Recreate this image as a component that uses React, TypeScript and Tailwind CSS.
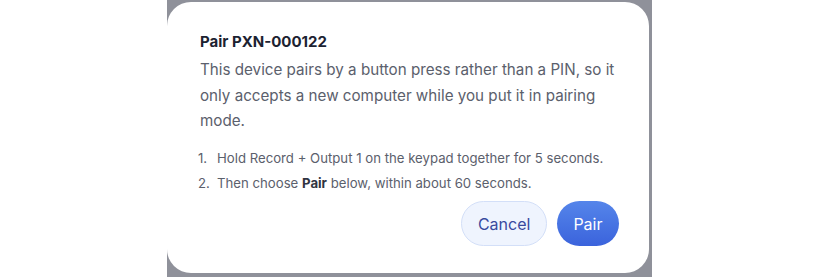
export default function App() {
  return (
    <div className="h-[277px] w-[820px] overflow-hidden bg-white" style={{ fontFamily: "Inter, 'Noto Sans', sans-serif" }}>
      <div className="ml-[167px] h-[277px] w-[485px] bg-[#8f919a] pt-[2px]">
        <div className="h-[271px] w-[482px] rounded-3xl bg-white pl-[33px] pr-[30px] pt-[30px]">
          <h2 className="text-[15px] font-bold leading-[20px] text-[#1c2231]">Pair PXN-000122</h2>
          <p className="mt-[5px] text-[15.2px] leading-[25.5px] text-[#5b606c]">
            This device pairs by a button press rather than a PIN, so it only accepts a new computer while you put it in pairing mode.
          </p>
          <ol className="-ml-[2px] mt-[15px] flex flex-col gap-[6.5px] text-[13.2px] leading-[19px] text-[#5b606c]">
            <li className="flex">
              <span className="w-[19px] shrink-0">1.</span>
              <span>Hold Record + Output 1 on the keypad together for 5 seconds.</span>
            </li>
            <li className="flex">
              <span className="w-[19px] shrink-0">2.</span>
              <span>
                Then choose <b className="font-bold text-[#2f3441]">Pair</b> below, within about 60 seconds.
              </span>
            </li>
          </ol>
          <div className="mt-[8px] flex justify-end gap-[10px]">
            <button className="h-[45px] rounded-full border border-[#d3dff8] bg-[#eff4fe] px-[15.5px] text-[16px] text-[#3a4a9e]">
              Cancel
            </button>
            <button className="h-[45px] rounded-full bg-gradient-to-b from-[#5585ea] to-[#3b63dc] px-[16.5px] text-[16px] text-white">
              Pair
            </button>
          </div>
        </div>
      </div>
    </div>
  );
}
